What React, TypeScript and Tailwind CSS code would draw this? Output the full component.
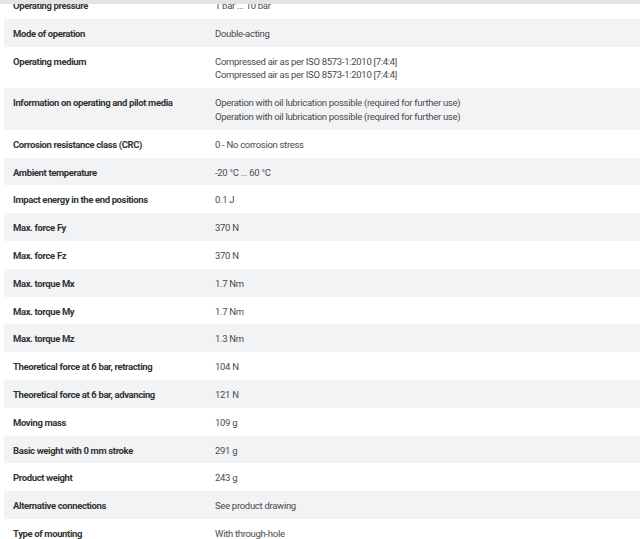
const rows: [string, string[]][] = [
  ['Operating pressure', ['1 bar ... 10 bar']],
  ['Mode of operation', ['Double-acting']],
  ['Operating medium', ['Compressed air as per ISO 8573-1:2010 [7:4:4]', 'Compressed air as per ISO 8573-1:2010 [7:4:4]']],
  ['Information on operating and pilot media', ['Operation with oil lubrication possible (required for further use)', 'Operation with oil lubrication possible (required for further use)']],
  ['Corrosion resistance class (CRC)', ['0 - No corrosion stress']],
  ['Ambient temperature', ['-20 °C ... 60 °C']],
  ['Impact energy in the end positions', ['0.1 J']],
  ['Max. force Fy', ['370 N']],
  ['Max. force Fz', ['370 N']],
  ['Max. torque Mx', ['1.7 Nm']],
  ['Max. torque My', ['1.7 Nm']],
  ['Max. torque Mz', ['1.3 Nm']],
  ['Theoretical force at 6 bar, retracting', ['104 N']],
  ['Theoretical force at 6 bar, advancing', ['121 N']],
  ['Moving mass', ['109 g']],
  ['Basic weight with 0 mm stroke', ['291 g']],
  ['Product weight', ['243 g']],
  ['Alternative connections', ['See product drawing']],
  ['Type of mounting', ['With through-hole']],
];

export default function App() {
  return (
    <div className="relative w-[640px] h-[539px] overflow-hidden bg-white font-['Roboto',sans-serif]">
      {/* sticky header edge */}
      <div className="absolute top-0 left-0 right-0 h-[4px] bg-[#e3e4e6] z-10" />

      <div className="-mt-[9px] ml-1">
        {rows.map(([label, values], i) => (
          <div
            key={label}
            className={`grid grid-cols-[202px_1fr] pl-[9px] pt-[8px] pb-[6px] leading-[13.8px] ${i % 2 === 1 ? 'bg-[#f2f3f5]' : 'bg-white'}`}
          >
            <div className="text-[9.5px] font-bold tracking-[-0.37px] text-[#333333]">{label}</div>
            <div className="text-[9.5px] tracking-[-0.3px] text-[#4a4a4a]">
              {values.map((v, j) => (
                <div key={j}>{v}</div>
              ))}
            </div>
          </div>
        ))}
      </div>
    </div>
  );
}
